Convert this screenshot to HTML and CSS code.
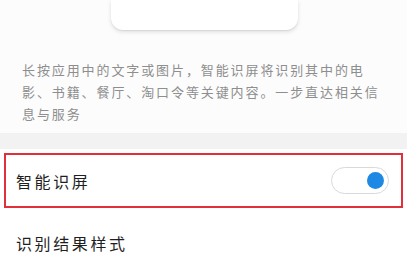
FILE: index.html
```html
<!DOCTYPE html>
<html lang="zh">
<head>
<meta charset="utf-8">
<link rel="stylesheet" href="styles.css">
</head>
<body>
<section class="intro">
  <div class="preview"><div class="card"></div></div>
  <p class="desc"><span class="line">长按应用中的文字或图片，智能识屏将识别其中的电</span><span class="line">影、书籍、餐厅、淘口令等关键内容。一步直达相关信</span><span class="line">息与服务</span></p>
</section>
<div class="band"></div>
<div class="list">
  <div class="row highlight">
    <span class="label">智能识屏</span>
    <span class="switch"><span class="knob"></span></span>
  </div>
  <div class="row plain">
    <span class="label">识别结果样式</span>
  </div>
</div>
</body>
</html>
```
FILE: styles.css
```css
html, body {
  margin: 0;
  padding: 0;
  background: #ffffff;
  font-family: "Noto Sans CJK SC", "Noto Sans", sans-serif;
  width: 407px;
  height: 254px;
  overflow: hidden;
}
.intro {
  background: #fcfcfc;
  padding-bottom: 8px;
}
.preview {
  display: flex;
  justify-content: center;
  padding-left: 2px;
}
.card {
  width: 187px;
  height: 30px;
  background: #ffffff;
  border-radius: 0 0 12px 12px;
  box-shadow: 0 2px 4px rgba(0,0,0,0.12), 0 1px 1px rgba(0,0,0,0.06);
}
.desc {
  margin: 0;
  padding: 29px 0 0 22px;
  font-size: 13px;
  line-height: 22px;
  letter-spacing: 1.9px;
  color: #8e8e8e;
}
.line {
  display: block;
  white-space: nowrap;
}
.band {
  height: 16px;
  background: #f2f2f2;
}
.list {
  padding: 4px 4px 0;
}
.row {
  display: flex;
  align-items: center;
  justify-content: space-between;
}
.highlight {
  height: 51px;
  border: 2px solid #e0303a;
  padding: 0 12px 0 10px;
}
.plain {
  height: 18px;
  padding: 0 12px;
  margin-top: 26px;
}
.label {
  font-size: 16px;
  line-height: 18px;
  letter-spacing: 2.6px;
  color: #1f1f1f;
}
.switch {
  width: 52px;
  height: 25px;
  border: 1.5px solid #d9d9d9;
  border-radius: 15px;
  background: #ffffff;
  display: flex;
  align-items: center;
  justify-content: flex-end;
  padding-right: 4px;
}
.knob {
  width: 17px;
  height: 17px;
  border-radius: 50%;
  background: #1e88e5;
}
```
